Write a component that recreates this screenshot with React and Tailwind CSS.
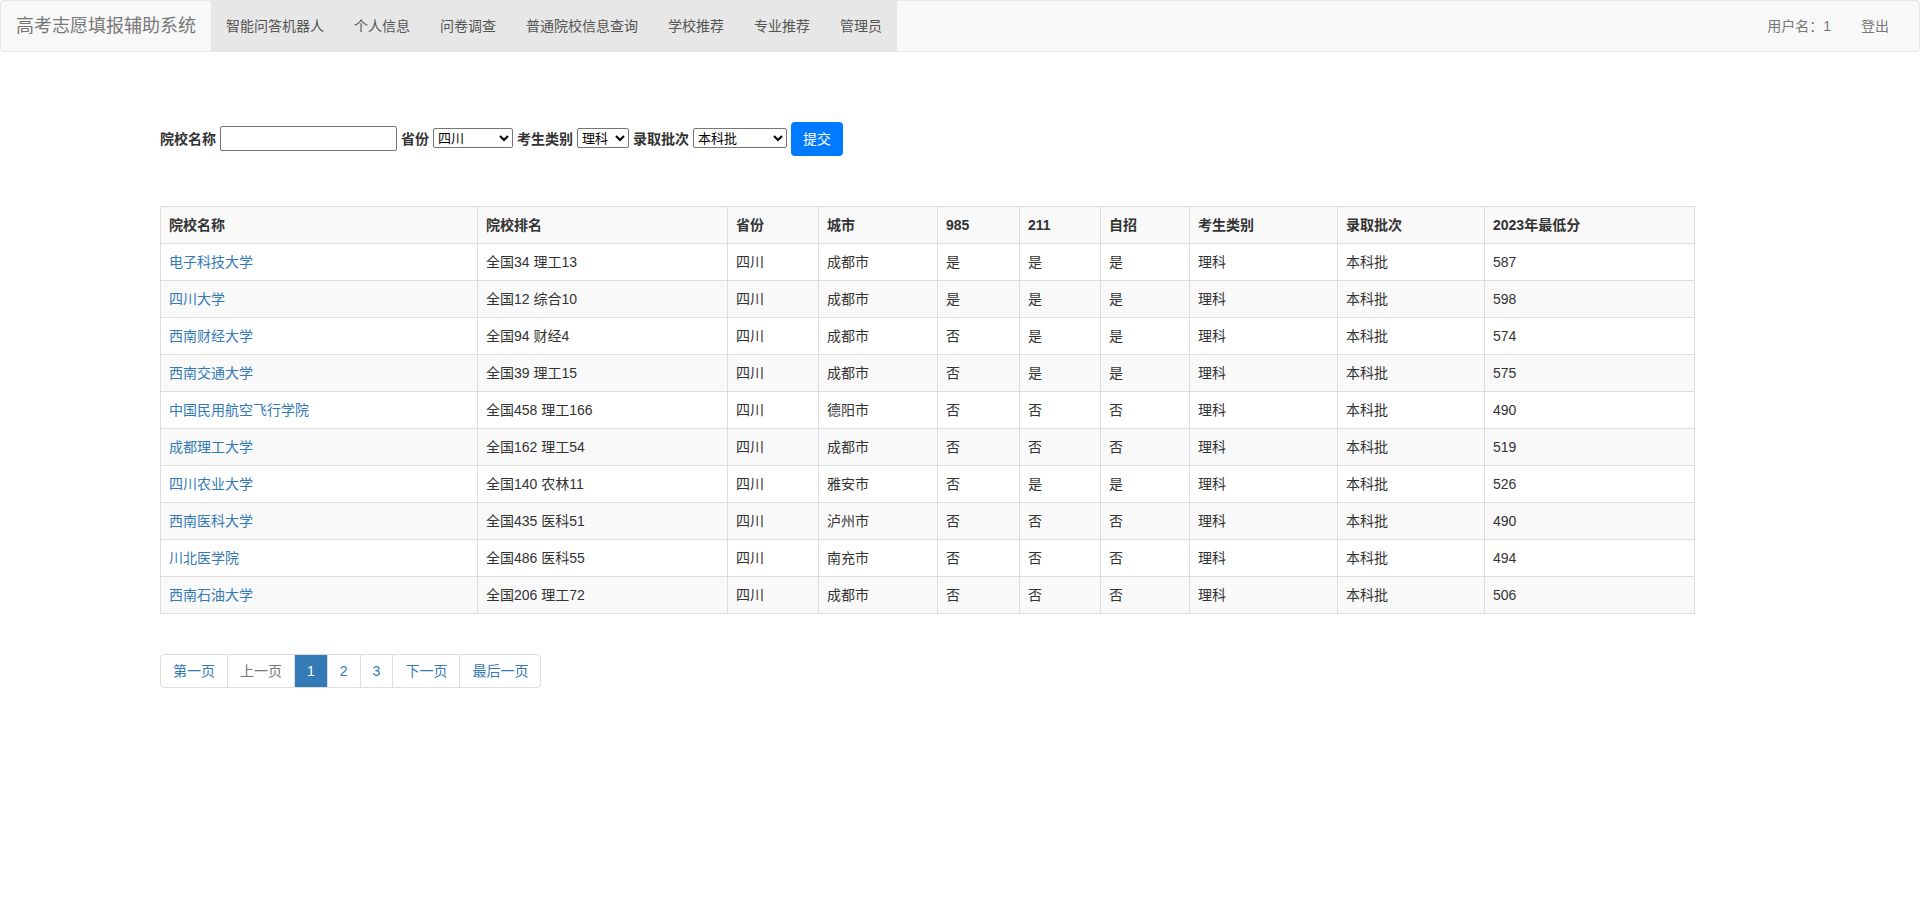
import React from 'react';

const navLinks = ['智能问答机器人', '个人信息', '问卷调查', '普通院校信息查询', '学校推荐', '专业推荐', '管理员'];

const columns = [
  { title: '院校名称', w: 'w-[317px]' },
  { title: '院校排名', w: 'w-[250px]' },
  { title: '省份', w: 'w-[91px]' },
  { title: '城市', w: 'w-[119px]' },
  { title: '985', w: 'w-[82px]' },
  { title: '211', w: 'w-[81px]' },
  { title: '自招', w: 'w-[89px]' },
  { title: '考生类别', w: 'w-[148px]' },
  { title: '录取批次', w: 'w-[147px]' },
  { title: '2023年最低分', w: 'w-[210px]' },
];

const schools = [
  ['电子科技大学', '全国34 理工13', '成都市', '是', '是', '是', '587'],
  ['四川大学', '全国12 综合10', '成都市', '是', '是', '是', '598'],
  ['西南财经大学', '全国94 财经4', '成都市', '否', '是', '是', '574'],
  ['西南交通大学', '全国39 理工15', '成都市', '否', '是', '是', '575'],
  ['中国民用航空飞行学院', '全国458 理工166', '德阳市', '否', '否', '否', '490'],
  ['成都理工大学', '全国162 理工54', '成都市', '否', '否', '否', '519'],
  ['四川农业大学', '全国140 农林11', '雅安市', '否', '是', '是', '526'],
  ['西南医科大学', '全国435 医科51', '泸州市', '否', '否', '否', '490'],
  ['川北医学院', '全国486 医科55', '南充市', '否', '否', '否', '494'],
  ['西南石油大学', '全国206 理工72', '成都市', '否', '否', '否', '506'],
];

const pages = [
  { label: '第一页', cls: 'text-[#337ab7] bg-white' },
  { label: '上一页', cls: 'text-[#777] bg-white' },
  { label: '1', cls: 'text-white bg-[#337ab7] border-[#337ab7]' },
  { label: '2', cls: 'text-[#337ab7] bg-white' },
  { label: '3', cls: 'text-[#337ab7] bg-white' },
  { label: '下一页', cls: 'text-[#337ab7] bg-white' },
  { label: '最后一页', cls: 'text-[#337ab7] bg-white' },
];

function Navbar() {
  return (
    <nav className="flex h-[52px] border border-[#e7e7e7] rounded-[4px] bg-[#f8f8f8] pr-[15px]">
      <a className="h-[50px] px-[15px] py-[15px] text-[18px] leading-[20px] text-[#777]">高考志愿填报辅助系统</a>
      <ul className="flex bg-[#e7e7e7]">
        {navLinks.map((l) => (
          <li key={l}>
            <a className="block px-[15px] py-[15px] text-[14px] leading-[20px] text-[#555]">{l}</a>
          </li>
        ))}
      </ul>
      <ul className="flex ml-auto">
        <li>
          <a className="block px-[15px] py-[15px] text-[14px] leading-[20px] text-[#777]">用户名：1</a>
        </li>
        <li>
          <a className="block px-[15px] py-[15px] text-[14px] leading-[20px] text-[#777]">登出</a>
        </li>
      </ul>
    </nav>
  );
}

function SearchForm() {
  return (
    <form className="flex items-center gap-[4px] mt-[70px] ml-[160px] text-[14px] leading-[20px] text-[#333]">
      <label className="font-bold">院校名称</label>
      <input type="text" className="w-[177px] h-[25px] -mt-[2px] border border-[#767676] rounded-[2px] px-[2px] bg-white" />
      <label className="font-bold">省份</label>
      <select defaultValue="四川" className="w-[80px] h-[20px] -mt-[2px] border border-[#767676] rounded-[2px] text-[13px] leading-[18px] text-black bg-white">
        <option>四川</option>
        <option>北京</option>
      </select>
      <label className="font-bold">考生类别</label>
      <select defaultValue="理科" className="w-[52px] h-[20px] -mt-[2px] border border-[#767676] rounded-[2px] text-[13px] leading-[18px] text-black bg-white">
        <option>理科</option>
        <option>文科</option>
      </select>
      <label className="font-bold">录取批次</label>
      <select defaultValue="本科批" className="w-[94px] h-[20px] -mt-[2px] border border-[#767676] rounded-[2px] text-[13px] leading-[18px] text-black bg-white">
        <option>本科批</option>
        <option>专科批</option>
      </select>
      <button type="button" className="h-[34px] px-[12px] rounded-[4px] bg-[#007bff] text-white text-[14px]">提交</button>
    </form>
  );
}

function SchoolTable() {
  return (
    <table className="table-fixed border-collapse w-[1535px] ml-[160px] mt-[50px] text-[14px] leading-[20px] text-[#333]">
      <tbody>
        <tr className="bg-[#f9f9f9]">
          {columns.map((c) => (
            <th key={c.title} className={`${c.w} border border-[#ddd] p-[8px] text-left font-bold`}>{c.title}</th>
          ))}
        </tr>
        {schools.map((s, i) => (
          <tr key={s[0]} className={i % 2 === 1 ? 'bg-[#f9f9f9]' : 'bg-white'}>
            <td className="border border-[#ddd] p-[8px]">
              <a className="text-[#337ab7]">{s[0]}</a>
            </td>
            <td className="border border-[#ddd] p-[8px]">{s[1]}</td>
            <td className="border border-[#ddd] p-[8px]">四川</td>
            <td className="border border-[#ddd] p-[8px]">{s[2]}</td>
            <td className="border border-[#ddd] p-[8px]">{s[3]}</td>
            <td className="border border-[#ddd] p-[8px]">{s[4]}</td>
            <td className="border border-[#ddd] p-[8px]">{s[5]}</td>
            <td className="border border-[#ddd] p-[8px]">理科</td>
            <td className="border border-[#ddd] p-[8px]">本科批</td>
            <td className="border border-[#ddd] p-[8px]">{s[6]}</td>
          </tr>
        ))}
      </tbody>
    </table>
  );
}

function Pagination() {
  return (
    <ul className="flex ml-[160px] mt-[40px] text-[14px] leading-[20px]">
      {pages.map((p, i) => (
        <li key={p.label}>
          <a
            className={`block px-[12px] py-[6px] border border-[#ddd] ${i > 0 ? '-ml-px' : 'rounded-l-[4px]'} ${i === pages.length - 1 ? 'rounded-r-[4px]' : ''} ${p.cls}`}
          >
            {p.label}
          </a>
        </li>
      ))}
    </ul>
  );
}

export default function App() {
  return (
    <div className="min-h-[911px] bg-white font-['Liberation_Sans','Noto_Sans_CJK_SC',sans-serif]">
      <Navbar />
      <SearchForm />
      <SchoolTable />
      <Pagination />
    </div>
  );
}
